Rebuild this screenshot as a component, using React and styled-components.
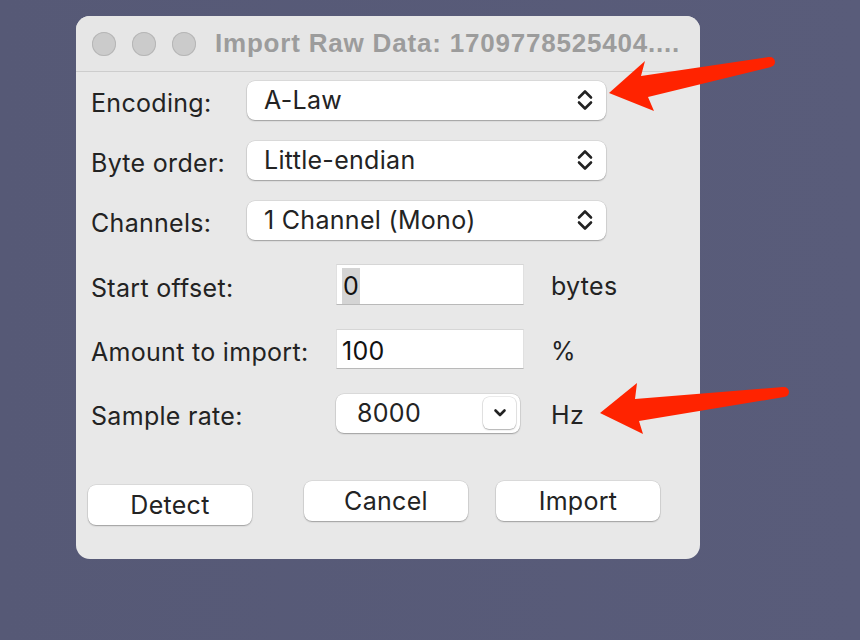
import styled, { createGlobalStyle } from "styled-components";

const GlobalStyle = createGlobalStyle`
  html, body {
    margin: 0;
    padding: 0;
    width: 860px;
    height: 640px;
    overflow: hidden;
  }
  body {
    background: #575a78;
    font-family: Inter, "Liberation Sans", Arial, sans-serif;
  }
`;

const Desktop = styled.div`
  position: relative;
  width: 860px;
  height: 640px;
  padding: 16px 0 0 76px;
  box-sizing: border-box;
  background: linear-gradient(90deg, #565976 0%, #595c7a 100%);
`;

const Window = styled.div`
  width: 624px;
  height: 543px;
  background: #e8e8e8;
  border-radius: 14px;
  overflow: hidden;
  display: flex;
  flex-direction: column;
`;

const TitleBar = styled.div`
  height: 56px;
  flex-shrink: 0;
  display: flex;
  align-items: center;
  padding-left: 16px;
  gap: 16px;
  background: #e6e6e6;
  border-bottom: 1px solid #cdcdcd;
  box-sizing: border-box;
`;

const Light = styled.span`
  width: 24px;
  height: 24px;
  border-radius: 50%;
  background: #cbcbcb;
  box-shadow: inset 0 0 0 1px #b6b6b6;
  flex-shrink: 0;
`;

const Title = styled.div`
  margin-left: 3px;
  font-family: "Liberation Sans", Arial, sans-serif;
  font-weight: 700;
  font-size: 26px;
  letter-spacing: 0.8px;
  color: #9c9c9c;
  white-space: nowrap;
`;

const Body = styled.div`
  padding: 8px 15px 0 15px;
  display: flex;
  flex-direction: column;
`;

const Row = styled.div`
  display: flex;
  align-items: center;
  height: ${(p) => p.h || 40}px;
  margin-top: ${(p) => p.mt || 0}px;
`;

const text = `
  font-size: 25px;
  letter-spacing: 0.3px;
  color: #232323;
  white-space: nowrap;
`;

const Label = styled.div`
  ${text}
  width: ${(p) => p.w}px;
  flex-shrink: 0;
  padding-top: 6px;
`;

const Select = styled.div`
  ${text}
  width: ${(p) => p.w}px;
  height: 39px;
  background: #fff;
  border-radius: 8px;
  box-shadow: 0 0 0 0.5px rgba(0, 0, 0, 0.12), 0 1px 1.5px rgba(0, 0, 0, 0.28);
  display: flex;
  align-items: center;
  justify-content: space-between;
  padding: 0 ${(p) => p.pr || 13}px 0 ${(p) => p.pl || 17}px;
  box-sizing: border-box;
`;

const Field = styled.div`
  ${text}
  color: #111;
  width: 188px;
  height: ${(p) => p.h || 41}px;
  background: #fff;
  border-top: 1px solid #d6d6d6;
  border-bottom: 1.5px solid #b9b9b9;
  border-left: 1px solid #e0e0e0;
  border-right: 1px solid #e0e0e0;
  box-sizing: border-box;
  display: flex;
  align-items: center;
  padding: 3px 0 0 5px;
`;

const Selected = styled.span`
  background: #d4d4d4;
  padding: 3px 1px;
`;

const Unit = styled.div`
  ${text}
  margin-left: ${(p) => p.ml || 27}px;
  padding-top: 3px;
`;

const StepButton = styled.div`
  width: 33px;
  height: 32px;
  border-radius: 6px;
  background: #fff;
  box-shadow: 0 0 0 0.5px rgba(0, 0, 0, 0.15), 0 1px 1.5px rgba(0, 0, 0, 0.25);
  display: flex;
  align-items: center;
  justify-content: center;
`;

const Buttons = styled.div`
  display: flex;
  align-items: flex-start;
  margin-top: 48px;
`;

const Button = styled.div`
  ${text}
  width: 164px;
  height: 40px;
  margin-top: ${(p) => p.mt || 0}px;
  margin-left: ${(p) => p.ml || 0}px;
  background: #fff;
  border-radius: 8px;
  box-shadow: 0 0 0 0.5px rgba(0, 0, 0, 0.12), 0 1px 1.5px rgba(0, 0, 0, 0.28);
  display: flex;
  align-items: center;
  justify-content: center;
  box-sizing: border-box;
`;

const Overlay = styled.svg`
  position: absolute;
  left: 0;
  top: 0;
  pointer-events: none;
`;

function UpDown() {
  return (
    <svg width="16" height="22" viewBox="0 0 16 22">
      <path d="M2 8.5 L8 2.5 L14 8.5" fill="none" stroke="#222" strokeWidth="2.6" strokeLinecap="round" strokeLinejoin="round" />
      <path d="M2 13.5 L8 19.5 L14 13.5" fill="none" stroke="#222" strokeWidth="2.6" strokeLinecap="round" strokeLinejoin="round" />
    </svg>
  );
}

function Down() {
  return (
    <svg width="14" height="10" viewBox="0 0 14 10">
      <path d="M2.5 2.5 L7 7 L11.5 2.5" fill="none" stroke="#222" strokeWidth="2.6" strokeLinecap="round" strokeLinejoin="round" />
    </svg>
  );
}

const popups = [
  { label: "Encoding:", value: "A-Law" },
  { label: "Byte order:", value: "Little-endian" },
  { label: "Channels:", value: "1 Channel (Mono)" },
];

function App() {
  return (
    <>
      <GlobalStyle />
      <Desktop>
        <Window>
          <TitleBar>
            <Light />
            <Light />
            <Light />
            <Title>Import Raw Data: 1709778525404....</Title>
          </TitleBar>
          <Body>
            {popups.map((p, i) => (
              <Row key={p.label} mt={i === 0 ? 0 : 20}>
                <Label w={156}>{p.label}</Label>
                <Select w={359}>
                  <span>{p.value}</span>
                  <UpDown />
                </Select>
              </Row>
            ))}

            <Row h={41} mt={24}>
              <Label w={245}>Start offset:</Label>
              <Field>
                <Selected>0</Selected>
              </Field>
              <Unit>bytes</Unit>
            </Row>
            <Row mt={24}>
              <Label w={245}>Amount to import:</Label>
              <Field h={40}>100</Field>
              <Unit>%</Unit>
            </Row>
            <Row mt={24}>
              <Label w={245}>Sample rate:</Label>
              <Select w={184} pl={21} pr={4}>
                <span>8000</span>
                <StepButton>
                  <Down />
                </StepButton>
              </Select>
              <Unit ml={31}>Hz</Unit>
            </Row>

            <Buttons>
              <Button mt={4} ml={-3}>Detect</Button>
              <Button ml={52}>Cancel</Button>
              <Button ml={28}>Import</Button>
            </Buttons>
          </Body>
        </Window>

        <Overlay width="860" height="640" viewBox="0 0 860 640">
          <polygon
            points="609,93 645,61 641,76 769,57 771,67 648,97 654,111"
            fill="#ff2300"
          />
          <circle cx="770" cy="62" r="5" fill="#ff2300" />
          <polygon
            points="600,413 637,383 635,399 783,387 784,397 639,421 643,434"
            fill="#ff2300"
          />
          <circle cx="784" cy="392" r="5" fill="#ff2300" />
        </Overlay>
      </Desktop>
    </>
  );
}

export default App;
